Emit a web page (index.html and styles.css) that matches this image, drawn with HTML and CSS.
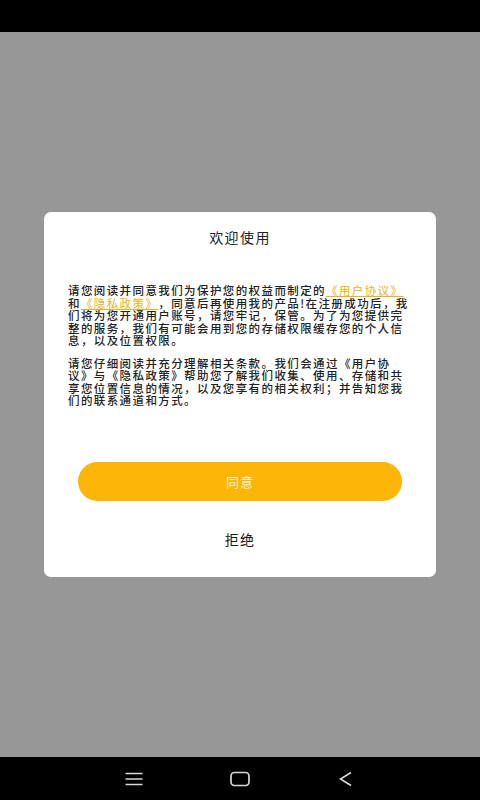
FILE: index.html
```html
<!DOCTYPE html>
<html lang="zh-CN">
<head>
<meta charset="utf-8">
<title>欢迎使用</title>
<link rel="stylesheet" href="styles.css">
</head>
<body>
<div class="statusbar"></div>
<main class="stage">
  <section class="dialog">
    <h1 class="title">欢迎使用</h1>
    <div class="content">
      <p class="para">请您阅读并同意我们为保护您的权益而制定的<a class="link" href="#">《用户协议》</a>和<a class="link" href="#">《隐私政策》</a>，同意后再使用我的产品!在注册成功后，我们将为您开通用户账号，请您牢记，保管。为了为您提供完整的服务，我们有可能会用到您的存储权限缓存您的个人信息，以及位置权限。</p>
      <p class="para">请您仔细阅读并充分理解相关条款。我们会通过《用户协议》与《隐私政策》帮助您了解我们收集、使用、存储和共享您位置信息的情况，以及您享有的相关权利；并告知您我们的联系通道和方式。</p>
    </div>
    <button class="agree" type="button">同意</button>
    <button class="refuse" type="button">拒绝</button>
  </section>
</main>
<nav class="navbar">
  <span class="navslot">
    <svg width="20" height="16" viewBox="0 0 20 16"><path d="M1.5 2.5H18.5M1.5 8H18.5M1.5 13.5H18.5" stroke="#d8d8d8" stroke-width="1.6" fill="none"/></svg>
  </span>
  <span class="navslot">
    <svg width="22" height="18" viewBox="0 0 22 18"><rect x="2" y="2.5" width="18" height="13" rx="3.5" stroke="#d8d8d8" stroke-width="1.7" fill="none"/></svg>
  </span>
  <span class="navslot">
    <svg width="16" height="16" viewBox="0 0 16 16"><path d="M13 1.5L2.5 8L13 14.5" stroke="#d8d8d8" stroke-width="1.6" fill="none"/></svg>
  </span>
</nav>
</body>
</html>
```
FILE: styles.css
```css
html, body {
  margin: 0;
  padding: 0;
}
body {
  width: 480px;
  height: 800px;
  display: flex;
  flex-direction: column;
  font-family: "Noto Sans CJK SC", "Noto Sans", sans-serif;
  background: #979797;
}
.statusbar {
  height: 32px;
  background: #000;
  flex: none;
}
.stage {
  flex: 1;
  display: flex;
  align-items: center;
  justify-content: center;
  background: #979797;
}
.dialog {
  width: 392px;
  box-sizing: border-box;
  background: #fff;
  border-radius: 7px;
  padding: 16px 24px 29px;
  display: flex;
  flex-direction: column;
}
.title {
  margin: 0;
  font-size: 14px;
  line-height: 18px;
  font-weight: 400;
  letter-spacing: 1.4px;
  color: #222;
  text-align: center;
}
.content {
  margin-top: 38px;
}
.para {
  margin: 0;
  font-size: 11.5px;
  line-height: 12.5px;
  letter-spacing: 1.4px;
  font-weight: 500;
  color: #222;
  line-break: strict;
  text-spacing-trim: space-all;
}
.para + .para {
  margin-top: 10px;
}
.link {
  display: inline-block;
  line-height: 12.5px;
  height: 12.5px;
  font-weight: 400;
  color: #e6b21c;
  text-decoration: underline;
  text-underline-offset: 1px;
}
.agree {
  margin: 55px 10px 0;
  height: 39px;
  border: none;
  border-radius: 20px;
  background: #fdb508;
  color: #fff4cf;
  font-family: inherit;
  font-size: 13px;
  letter-spacing: 1px;
  padding: 0;
}
.refuse {
  margin-top: 29px;
  border: none;
  background: none;
  padding: 0;
  font-family: inherit;
  font-size: 14px;
  line-height: 18px;
  letter-spacing: 1.2px;
  color: #1a1a1a;
}
.navbar {
  height: 43px;
  flex: none;
  background: #000;
  display: flex;
  justify-content: center;
  align-items: center;
}
.navslot {
  width: 106px;
  display: flex;
  justify-content: center;
  align-items: center;
}
.navslot svg {
  display: block;
}
```
